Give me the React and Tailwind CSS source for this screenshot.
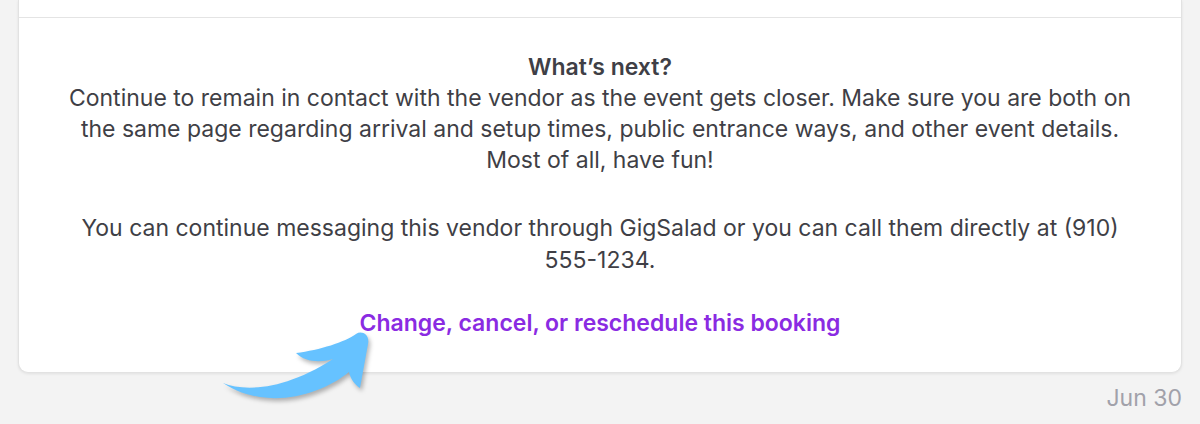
import React from 'react';

// Curved hint arrow pointing at the booking link
function HintArrow() {
  return (
    <svg
      className="absolute left-[215px] top-[325px] z-10 h-[95px] w-[165px] drop-shadow-[2px_3px_2px_rgba(0,0,0,0.28)]"
      viewBox="215 325 165 95"
      fill="#66c2ff"
    >
      <path d="M223 383 C245 392 285 390 333 359 C320 363 305 362 296 353 C320 350 345 342 356 334 C362 330 370 335 368 344 L360 388 C355 385 350 378 349 372 C320 396 265 411 223 383 Z" />
    </svg>
  );
}

export default function App() {
  return (
    <div className="relative min-h-screen bg-[#f3f3f3] px-[18px] font-['Inter','Noto_Sans',sans-serif]">
      <div className="rounded-b-[10px] border-x border-b border-[#e2e2e2] bg-white shadow-[0_1px_3px_rgba(0,0,0,0.08)]">
        <div className="h-[18px] border-b border-[#e4e4e4]"></div>
        <div className="mx-auto max-w-[1090px] pb-[33px] pt-[34px] text-center text-[23px] leading-[31px] text-[#3f3f46]">
          <p className="font-semibold">What’s next?</p>
          <p>
            Continue to remain in contact with the vendor as the event gets closer. Make sure you are both on
            the same page regarding arrival and setup times, public entrance ways, and other event details.
            Most of all, have fun!
          </p>
          <div className="h-[36px]"></div>
          <p className="leading-[32px]">
            You can continue messaging this vendor through GigSalad or you can call them directly at (910)
            555-1234.
          </p>
          <div className="mt-[32px]">
            <a href="#" className="font-semibold text-[#8a2be2]">
              Change, cancel, or reschedule this booking
            </a>
          </div>
        </div>
      </div>
      <div className="mt-[10px] flex justify-end text-[23px] leading-[31px] text-[#a1a1aa]">Jun 30</div>
      <HintArrow />
    </div>
  );
}
